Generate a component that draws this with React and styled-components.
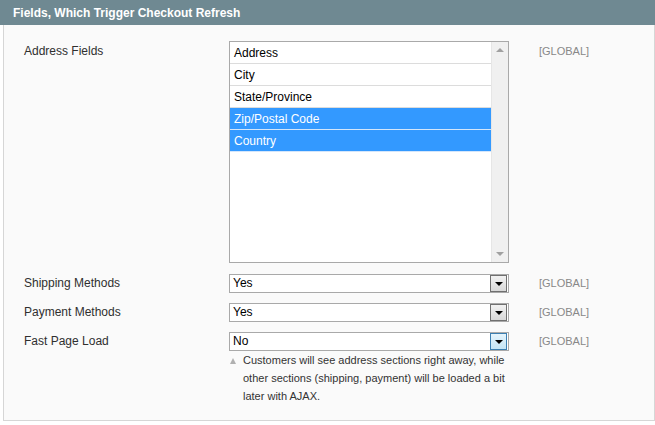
import React from 'react';
import styled, { createGlobalStyle } from 'styled-components';

const GlobalStyle = createGlobalStyle`
  html, body {
    margin: 0;
    padding: 0;
    background: #fff;
  }
  body {
    font-family: Arial, "Liberation Sans", Helvetica, sans-serif;
    font-size: 12px;
    color: #2f2f2f;
  }
`;

const Page = styled.div`
  width: 655px;
  height: 425px;
  overflow: hidden;
`;

const Header = styled.div`
  height: 25px;
  background: #6f8992;
  color: #fff;
  font-weight: bold;
  font-size: 12px;
  line-height: 26px;
  padding-left: 13px;
  box-sizing: border-box;
`;

const Body = styled.div`
  margin-left: 3px;
  border: 1px solid #d6d6d6;
  border-top: 0;
  background: #fafafa;
  height: 396px;
  box-sizing: border-box;
  padding: 16px 0 0 20px;
  display: grid;
  grid-template-columns: 205px 280px 30px auto;
  grid-auto-rows: min-content;
  align-content: start;
`;

const Label = styled.div`
  grid-column: 1;
  padding-top: ${p => (p.top ? '3px' : '2px')};
  line-height: 14px;
  color: #2f2f2f;
`;

const Control = styled.div`
  grid-column: 2;
  margin-bottom: ${p => p.gap}px;
`;

const Scope = styled.div`
  grid-column: 4;
  font-size: 11px;
  color: #888;
  padding-top: ${p => (p.top ? '3px' : '2px')};
  line-height: 14px;
`;

const ListBox = styled.div`
  height: 222px;
  box-sizing: border-box;
  border: 1px solid #a9a9a9;
  background: #fff;
  display: flex;
`;

const Options = styled.div`
  flex: 1;
`;

const Option = styled.div`
  height: 22px;
  box-sizing: border-box;
  line-height: 20px;
  padding: 1px 0 0 4px;
  border-bottom: 1px solid ${p => (p.selected ? '#d4e6fb' : '#dcdcdc')};
  background: ${p => (p.selected ? '#3399ff' : '#fff')};
  color: ${p => (p.selected ? '#fff' : '#000')};
`;

const Scrollbar = styled.div`
  width: 16px;
  border-left: 1px solid #e6e6e6;
  background: #f0f0f0;
  display: flex;
  flex-direction: column;
  justify-content: space-between;
  align-items: center;
  padding: 6px 0 6px;
`;

const Arrow = styled.div`
  width: 0;
  height: 0;
  border-left: 4px solid transparent;
  border-right: 4px solid transparent;
  ${p =>
    p.up
      ? 'border-bottom: 4px solid #a0a0a0;'
      : 'border-top: 4px solid #a0a0a0;'}
`;

const Select = styled.div`
  height: 19px;
  box-sizing: border-box;
  border: 1px solid #a9a9a9;
  background: #fff;
  display: flex;
  align-items: center;
  padding: 0 1px 0 3px;
  color: #000;
`;

const SelectValue = styled.div`
  flex: 1;
  line-height: 17px;
`;

const DropButton = styled.div`
  width: 17px;
  height: 17px;
  box-sizing: border-box;
  border: 1px solid ${p => (p.focused ? '#3c7fb1' : '#707070')};
  background: ${p =>
    p.focused
      ? 'linear-gradient(#e5f4fc, #c4e5f6)'
      : 'linear-gradient(#f2f2f2, #d8d8d8)'};
  display: flex;
  align-items: center;
  justify-content: center;
  padding-top: 1px;
`;

const DownTriangle = styled.div`
  width: 0;
  height: 0;
  border-left: 4px solid transparent;
  border-right: 4px solid transparent;
  border-top: 4px solid #000;
`;

const Note = styled.div`
  font-size: 11px;
  line-height: 18px;
  color: #333;
  padding-left: 14px;
  position: relative;
  width: 265px;
`;

const NoteMark = styled.span`
  position: absolute;
  left: 1px;
  top: 7px;
  width: 0;
  height: 0;
  border-left: 3px solid transparent;
  border-right: 3px solid transparent;
  border-bottom: 6px solid #b0b0b0;
`;

const addressOptions = [
  { label: 'Address' },
  { label: 'City' },
  { label: 'State/Province' },
  { label: 'Zip/Postal Code', selected: true },
  { label: 'Country', selected: true },
];

const DropDown = ({ value, focused }) => (
  <Select>
    <SelectValue>{value}</SelectValue>
    <DropButton focused={focused}>
      <DownTriangle />
    </DropButton>
  </Select>
);

const App = () => {
  return (
    <Page>
      <GlobalStyle />
      <Header>Fields, Which Trigger Checkout Refresh</Header>
      <Body>
        <Label top>Address Fields</Label>
        <Control gap={11}>
          <ListBox>
            <Options>
              {addressOptions.map(o => (
                <Option key={o.label} selected={o.selected}>
                  {o.label}
                </Option>
              ))}
            </Options>
            <Scrollbar>
              <Arrow up />
              <Arrow />
            </Scrollbar>
          </ListBox>
        </Control>
        <Scope top>[GLOBAL]</Scope>

        <Label>Shipping Methods</Label>
        <Control gap={10}>
          <DropDown value="Yes" />
        </Control>
        <Scope>[GLOBAL]</Scope>

        <Label>Payment Methods</Label>
        <Control gap={10}>
          <DropDown value="Yes" />
        </Control>
        <Scope>[GLOBAL]</Scope>

        <Label>Fast Page Load</Label>
        <Control gap={0}>
          <DropDown value="No" focused />
          <Note>
            <NoteMark />
            Customers will see address sections right away, while other
            sections (shipping, payment) will be loaded a bit later with AJAX.
          </Note>
        </Control>
        <Scope>[GLOBAL]</Scope>
      </Body>
    </Page>
  );
};

export default App;
